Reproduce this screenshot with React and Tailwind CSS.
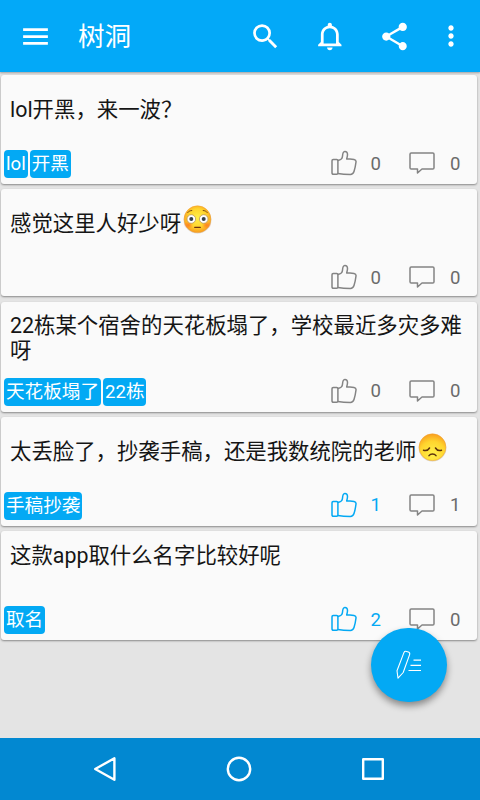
import { MdMenu, MdSearch, MdShare, MdMoreVert } from 'react-icons/md';

const posts = [
  { id: 1, text: 'lol开黑，来一波？', tags: ['lol', '开黑'], likes: 0, comments: 0, size: 'h-[109px] pb-[6px]', body: 'pt-[22px]' },
  { id: 2, text: '感觉这里人好少呀', emoji: 'flushed', tags: [], likes: 0, comments: 0, size: 'h-[107px] pb-[4px]', body: 'pt-[22px]' },
  { id: 3, text: '22栋某个宿舍的天花板塌了，学校最近多灾多难呀', tags: ['天花板塌了', '22栋'], likes: 0, comments: 0, size: 'h-[110px] pb-[6px]', body: 'pt-[11px]' },
  { id: 4, text: '太丢脸了，抄袭手稿，还是我数统院的老师', emoji: 'sad', tags: ['手稿抄袭'], likes: 1, liked: true, comments: 1, size: 'h-[109px] pb-[6px]', body: 'pt-[22px]' },
  { id: 5, text: '这款app取什么名字比较好呢', tags: ['取名'], likes: 2, liked: true, comments: 0, size: 'h-[109px] pb-[6px]', body: 'pt-[12px]' },
];

const BellIcon = () => (
  <svg className="h-[33px] w-[33px]" viewBox="0 0 24 24" fill="currentColor">
    <path d="M11.5 22c1.1 0 2-.9 2-2h-4c0 1.1.9 2 2 2zm6.5-6v-5.5c0-3.07-2.13-5.64-5-6.32V3.5c0-.83-.67-1.5-1.5-1.5S10 2.67 10 3.5v.68c-2.87.68-5 3.25-5 6.32V16l-2 2v1h17v-1l-2-2zm-2 1H7v-6.5C7 8.01 9.01 6 11.5 6S16 8.01 16 10.5V17z" />
  </svg>
);

const LikeIcon = () => (
  <svg className="-mt-[2px] h-[26px] w-[26px]" viewBox="0 0 26 26" fill="none" stroke="currentColor" strokeWidth="1.5" strokeLinejoin="round">
    <path d="M2.200 9.500h3.500c.8 0 1.200.5 1.200 1.200v12.100c0 .9-.4 1.500-1.200 1.500H2.400c-.9 0-1.400-.6-1.400-1.500V10.700c0-.8.4-1.200 1.200-1.200z" />
    <path d="M6.900 10.400c2.500-.3 4.400-1.500 4.600-4.200.1-2.200.3-4.700 2.300-4.800 1.800-.1 2.700 1.300 2.700 3.200 0 1.600-.4 2.700-.8 4.300 2.400.3 5 .1 7.300.5 1.500.3 2.200 1.200 2 2.600-.4 3.300-1 6.500-2 9.600-.6 1.800-1.800 2.900-3.600 2.900-4.200 0-8.300-.2-12.500-.9" />
  </svg>
);

const CommentIcon = () => (
  <svg className="-mt-[2px] h-[22px] w-[26px]" viewBox="0 0 26 22" fill="none" stroke="currentColor" strokeWidth="1.5" strokeLinejoin="round">
    <path d="M2.200 1h21.600c.8 0 1.200.5 1.200 1.200v13.500c0 .8-.4 1.300-1.200 1.300H13l-4.500 4V17H2.200C1.400 17 1 16.500 1 15.700V2.200C1 1.500 1.400 1 2.200 1z" />
  </svg>
);

const PencilIcon = () => (
  <svg className="-ml-[3px] h-[30px] w-[28px]" viewBox="0 0 28 30" fill="none" stroke="currentColor" strokeWidth="1.1" strokeLinejoin="round">
    <path d="M10 2.400c.5-1.100 1.300-1.400 2.500-1l1.900.7c1.300.5 1.600 1.300 1.200 2.500L9.200 22.500 4 28.200l-1-7.500z" />
    <path d="M19.500 10.200h7.500M16.500 15.300h10.500M14.500 20.500h12.500" strokeWidth="1.200" />
  </svg>
);

const Emoji = ({ name }) => (
  <svg className="-mt-[12px] ml-[2px] inline-block h-[29px] w-[29px] align-middle" viewBox="0 0 29 29">
    <defs>
      <radialGradient id={name + '-face'} cx="50%" cy={name === 'sad' ? '75%' : '45%'} r={name === 'sad' ? '78%' : '56%'}>
        <stop offset="0" stopColor="#fff04a" />
        <stop offset="0.600" stopColor="#ffd52e" />
        <stop offset="1" stopColor="#f8981d" />
      </radialGradient>
      <radialGradient id="blush">
        <stop offset="0" stopColor="#ff6a1f" stopOpacity="0.7" />
        <stop offset="1" stopColor="#ff6a1f" stopOpacity="0" />
      </radialGradient>
    </defs>
    <ellipse cx="14.500" cy="15" rx="13.900" ry="13.500" fill="#9b8b78" opacity="0.35" />
    <circle cx="14.500" cy="14.200" r="13.400" fill={`url(#${name}-face)`} stroke="#f0a035" strokeWidth="0.5" />
    {name === 'flushed' ? (
      <g>
        <ellipse cx="5.500" cy="20" rx="4.800" ry="3.800" fill="url(#blush)" />
        <ellipse cx="23.500" cy="20" rx="4.800" ry="3.800" fill="url(#blush)" />
        <path d="M4.500 7.800c1.200-1.500 2.800-2.300 4.700-2.300M24.500 7.800c-1.200-1.500-2.800-2.300-4.700-2.300" stroke="#7b4a12" strokeWidth="1" fill="none" />
        <circle cx="8.300" cy="14" r="4.300" fill="#fff" stroke="#b08a5a" strokeWidth="0.7" />
        <circle cx="20.700" cy="14" r="4.300" fill="#fff" stroke="#b08a5a" strokeWidth="0.7" />
        <circle cx="8.300" cy="14" r="2" fill="#35414b" />
        <circle cx="20.700" cy="14" r="2" fill="#35414b" />
        <path d="M11.700 22.300h5.600" stroke="#6d3210" strokeWidth="1.300" strokeLinecap="round" />
      </g>
    ) : (
      <g fill="none" stroke="#5c300c" strokeLinecap="round">
        <path d="M5.500 17.300c2.300.6 4.800-.3 6-2.300M23.500 17.300c-2.300.6-4.800-.3-6-2.300" strokeWidth="1.500" />
        <path d="M11 22.600c1.600-2.200 5.400-2.200 7 0" strokeWidth="1.500" />
      </g>
    )}
  </svg>
);

const Post = ({ post }) => (
  <article className={`flex flex-col justify-between rounded-[3px] bg-[#fafafa] shadow-[0_1px_2px_rgba(0,0,0,0.4)] ${post.size}`}>
    <p className={`pl-[9px] pr-2 text-[21.4px] leading-[25px] text-[#151515] ${post.body}`}>
      {post.text}
      {post.emoji && <Emoji name={post.emoji} />}
    </p>
    <div className="flex h-[28px] shrink-0 items-center justify-between pl-[3px] pr-[16.5px]">
      <div className="flex gap-[2px]">
        {post.tags.map((tag) => (
          <span key={tag} className="h-[28px] rounded-[4px] bg-[#03a9f4] px-[2px] text-[18.6px] leading-[29px] text-white">
            {tag}
          </span>
        ))}
      </div>
      <div className="flex items-center text-[18.6px] text-[#6b6b6b]">
        <div className={`flex items-center gap-[14px] ${post.liked ? 'text-[#03a9f4]' : ''}`}>
          <div className={post.liked ? '' : 'text-[#848484]'}>
            <LikeIcon />
          </div>
          <span className="pt-px">{post.likes}</span>
        </div>
        <div className="ml-[28px] flex items-center gap-[15px]">
          <div className="text-[#848484]">
            <CommentIcon />
          </div>
          <span className="pt-px">{post.comments}</span>
        </div>
      </div>
    </div>
  </article>
);

const App = () => {
  return (
    <div className="relative flex h-[800px] w-[480px] flex-col overflow-hidden bg-[#e4e4e4] font-['Roboto','Noto_Sans_CJK_SC',sans-serif]">
      {/* Toolbar */}
      <header className="flex h-[72px] shrink-0 items-center bg-[#03a9f8] pl-[19px] pr-[13px] text-white shadow-[0_1px_2px_rgba(0,0,0,0.3)]">
        <MdMenu className="h-[33px] w-[33px]" />
        <h1 className="ml-[26px] pt-[2px] text-[26.6px] leading-8">树洞</h1>
        <div className="ml-auto flex items-center gap-[32px]">
          <MdSearch className="h-[33px] w-[33px]" />
          <BellIcon />
          <MdShare className="-ml-px h-[33px] w-[33px]" />
          <MdMoreVert className="-ml-[8px] h-8 w-8" />
        </div>
      </header>

      {/* Post list */}
      <main className="flex flex-1 flex-col gap-[5.3px] pl-px pr-[3px] pt-[3px]">
        {posts.map((post) => (
          <Post key={post.id} post={post} />
        ))}
      </main>

      {/* Compose button */}
      <button className="absolute left-[371px] top-[628px] flex h-[74px] w-[76px] items-center justify-center rounded-full bg-[#03a9f4] text-white shadow-[0_4px_7px_rgba(0,0,0,0.4)]">
        <PencilIcon />
      </button>

      {/* System navigation */}
      <nav className="flex h-[62px] shrink-0 items-center justify-between bg-[#0288d1] pl-[93px] pr-[95px] text-white">
        <svg className="h-[26px] w-[24px]" viewBox="0 0 24 26" fill="none" stroke="currentColor" strokeWidth="2.400" strokeLinejoin="round">
          <path d="M2.200 13L21.400 2.300v21.400z" />
        </svg>
        <svg className="h-[26px] w-[26px]" viewBox="0 0 26 26" fill="none" stroke="currentColor" strokeWidth="2.400">
          <circle cx="13" cy="13" r="11.200" />
        </svg>
        <svg className="h-[24px] w-[24px]" viewBox="0 0 24 24" fill="none" stroke="currentColor" strokeWidth="2.400" strokeLinejoin="round">
          <path d="M2.200 2.200h19.600v19.600H2.200z" />
        </svg>
      </nav>
    </div>
  );
};

export default App;
